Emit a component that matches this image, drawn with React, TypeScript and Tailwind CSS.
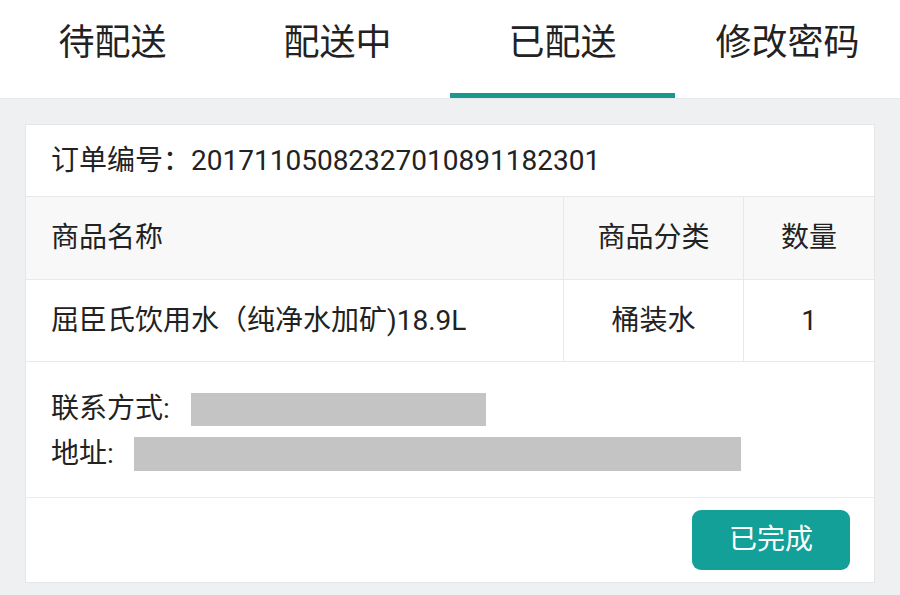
const tabs = ["待配送", "配送中", "已配送", "修改密码"];

export default function App() {
  const active = 2;

  return (
    <div
      className="w-[900px] h-[595px] bg-[#eef0f1] text-[#222] overflow-hidden"
      style={{ fontFamily: 'Roboto, "Noto Sans CJK SC", sans-serif' }}
    >
      {/* Tabs */}
      <div className="flex h-[99px] bg-white border-b border-[#e6e8e9]">
        {tabs.map((t, i) => (
          <div
            key={t}
            className={`flex-1 flex items-center justify-center text-[36px] pb-[8px] border-b-[5px] ${
              i === active ? "border-[#17998f]" : "border-transparent"
            }`}
          >
            {t}
          </div>
        ))}
      </div>

      {/* Order card */}
      <div className="mx-[25px] mt-[25px] bg-white border border-[#e6e6e6] text-[28px]">
        <div className="h-[71px] flex items-center px-[25px]">
          订单编号：20171105082327010891182301
        </div>

        <div className="flex h-[83px] bg-[#f8f8f8] border-t border-[#e8e8e8]">
          <div className="flex-1 flex items-center px-[25px]">商品名称</div>
          <div className="w-[180px] flex items-center justify-center border-l border-[#e8e8e8]">
            商品分类
          </div>
          <div className="w-[131px] flex items-center justify-center border-l border-[#e8e8e8]">
            数量
          </div>
        </div>

        <div className="flex h-[82px] border-t border-[#e8e8e8]">
          <div className="flex-1 flex items-center px-[25px]">
            屈臣氏饮用水（纯净水加矿)18.9L
          </div>
          <div className="w-[180px] flex items-center justify-center border-l border-[#e8e8e8]">
            桶装水
          </div>
          <div className="w-[131px] flex items-center justify-center border-l border-[#e8e8e8]">
            1
          </div>
        </div>

        <div className="h-[136px] border-t border-[#e8e8e8] px-[25px] pt-[30px] flex flex-col gap-[11px]">
          <div className="flex items-center h-[34px]">
            <span className="whitespace-nowrap shrink-0 w-[140px]">联系方式:</span>
            <span className="shrink-0 w-[295px] h-[33px] bg-[#c4c4c4]" />
          </div>
          <div className="flex items-center h-[34px]">
            <span className="whitespace-nowrap shrink-0 w-[83px]">地址:</span>
            <span className="shrink-0 w-[607px] h-[34px] bg-[#c4c4c4]" />
          </div>
        </div>

        <div className="h-[85px] border-t border-[#ececec] flex items-center justify-end pr-[24px]">
          <button className="w-[158px] h-[60px] rounded-[9px] bg-[#12a098] text-white text-[28px]">
            已完成
          </button>
        </div>
      </div>
    </div>
  );
}
